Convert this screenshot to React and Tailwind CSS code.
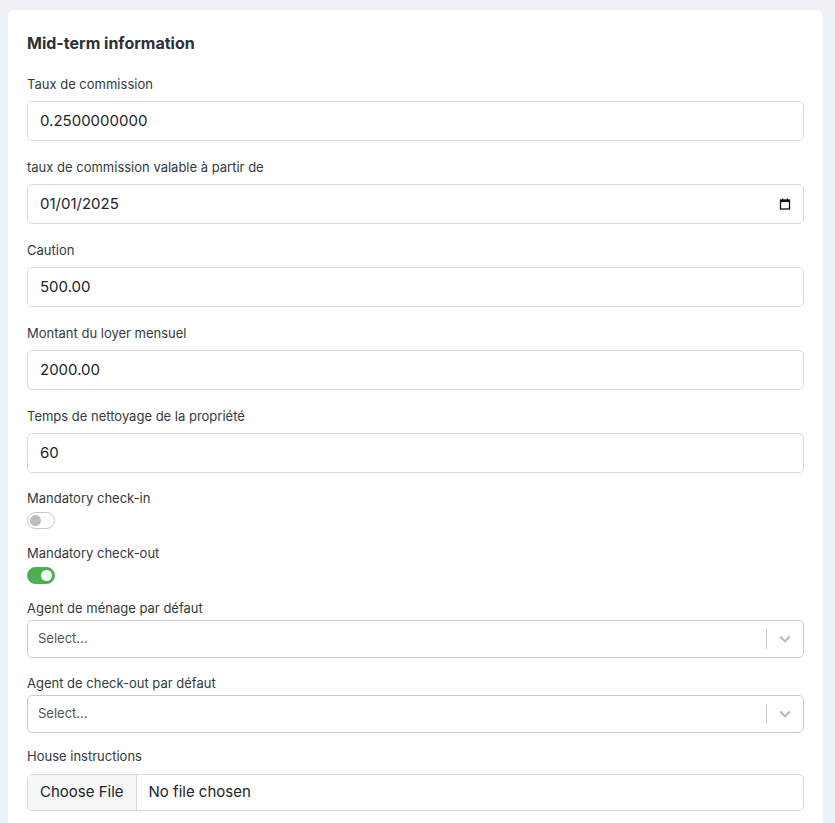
export default function App() {
  const lbl = "block text-[13px] leading-5 text-[#343a40]";
  const inp = "w-full h-10 rounded-[5px] border border-[#dcdcdc] px-3 text-[15px] text-[#212529] flex items-center";
  const Field = ({ label, value, date, first }) => (
    <div className={first ? "" : "mt-[16px]"}>
      <div className={lbl}>{label}</div>
      <div className={inp + " mt-[7px] justify-between"}>
        <span>{value}</span>
        {date && (
          <svg width="12" height="12" viewBox="0 0 12 12">
            <rect x="1.5" y="2" width="9" height="9" fill="none" stroke="#111" strokeWidth="1.3" />
            <rect x="1.5" y="2" width="9" height="2" fill="#111" />
            <rect x="3" y="0.5" width="1.3" height="2" fill="#111" />
            <rect x="7.7" y="0.5" width="1.3" height="2" fill="#111" />
          </svg>
        )}
      </div>
    </div>
  );
  const Toggle = ({ on }) => (
    <div className={"mt-[4px] w-[28px] h-[17px] rounded-full border flex items-center px-[2px] " + (on ? "bg-[#4caf50] border-[#4caf50] justify-end" : "bg-white border-[#c8c8c8] justify-start")}>
      <div className={"w-[11px] h-[11px] rounded-full " + (on ? "bg-white" : "bg-[#bdbdbd]")} />
    </div>
  );
  const Select = () => (
    <div className="mt-[2px] w-full h-[38px] rounded-[5px] border border-[#cccccc] flex items-center pl-[10px] text-[13px] text-[#555]">
      <span className="flex-1">Select...</span>
      <div className="w-px h-[20px] bg-[#cccccc]" />
      <div className="w-[36px] flex justify-center">
        <svg width="16" height="16" viewBox="0 0 20 20"><path d="M4 7l6 6 6-6" fill="none" stroke="#b8b8b8" strokeWidth="2.6" /></svg>
      </div>
    </div>
  );
  return (
    <div className="min-h-[823px] bg-[#eef2f7] pt-[10px] pl-[8px] pr-[12px]" style={{ fontFamily: "Inter, 'Liberation Sans', sans-serif" }}>
      <div className="bg-white rounded-t-[6px] px-[19px] pt-[21px] pb-[20px] min-h-[813px]">
        <div className="text-[16px] leading-6 font-bold text-[#2b2f36]">Mid-term information</div>
        <div className="mt-[19px]">
          <Field first label="Taux de commission" value="0.2500000000" />
          <Field label="taux de commission valable à partir de" value="01/01/2025" date />
          <Field label="Caution" value="500.00" />
          <Field label="Montant du loyer mensuel" value="2000.00" />
          <Field label="Temps de nettoyage de la propriété" value="60" />
          <div className="mt-[15px]">
            <div className={lbl}>Mandatory check-in</div>
            <Toggle />
          </div>
          <div className="mt-[14px]">
            <div className={lbl}>Mandatory check-out</div>
            <Toggle on />
          </div>
          <div className="mt-[14px]">
            <div className={lbl}>Agent de ménage par défaut</div>
            <Select />
          </div>
          <div className="mt-[15px]">
            <div className={lbl}>Agent de check-out par défaut</div>
            <Select />
          </div>
          <div className="mt-[13px]">
            <div className={lbl}>House instructions</div>
            <div className="mt-[8px] w-full h-[37px] rounded-[5px] border border-[#dcdcdc] flex items-stretch text-[15px] text-[#212529] overflow-hidden">
              <div className="bg-[#f6f7f8] border-r border-[#dcdcdc] px-3 flex items-center">Choose File</div>
              <div className="px-3 flex items-center">No file chosen</div>
            </div>
          </div>
        </div>
      </div>
    </div>
  );
}
